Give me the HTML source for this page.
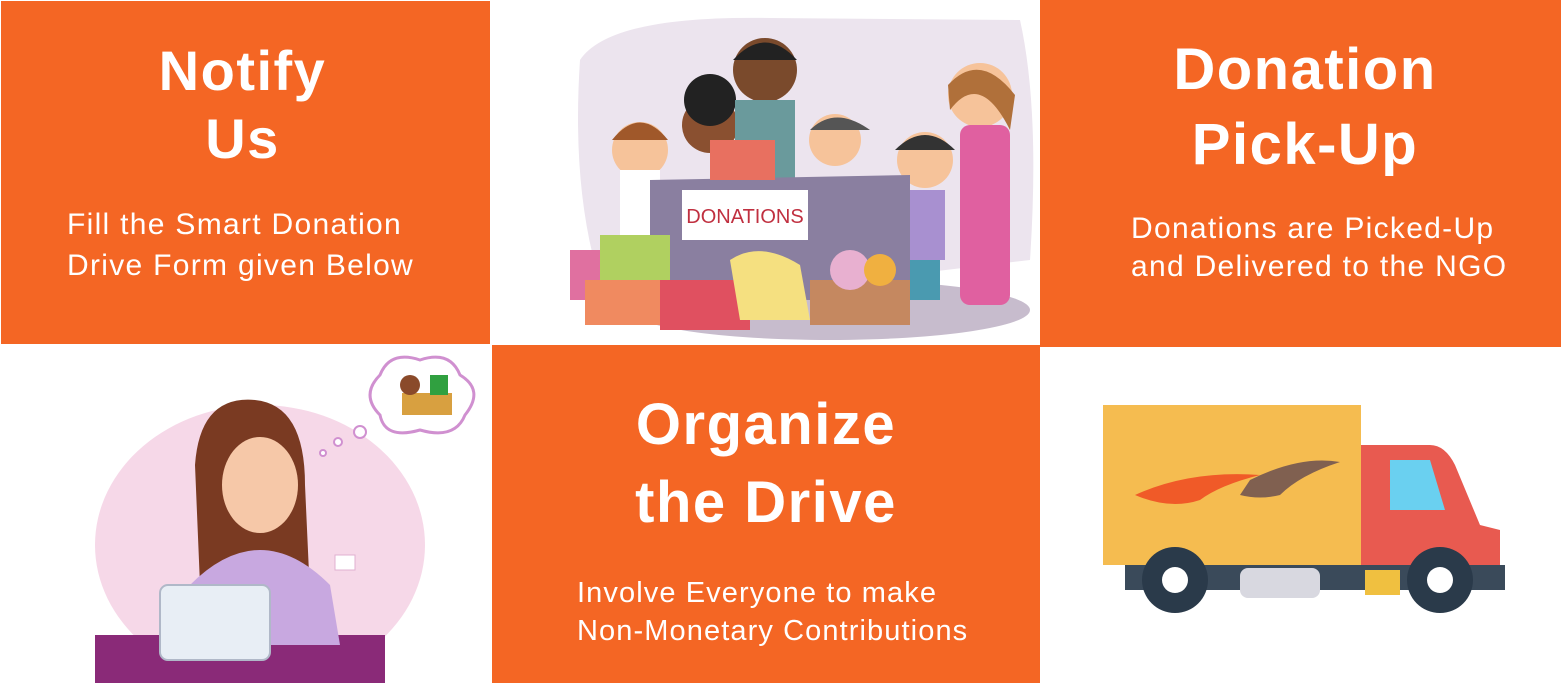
<!DOCTYPE html>
<html><head><meta charset="utf-8"><style>
*{margin:0;padding:0}
body{width:1561px;height:683px;background:#fff;position:relative;overflow:hidden;font-family:"Liberation Sans",sans-serif;color:#fff}
.o{position:absolute;background:#F46624}
.t{position:absolute;font-weight:bold;text-align:center;line-height:1.25;letter-spacing:1.5px}
.s{position:absolute;font-size:30px;line-height:41px;letter-spacing:1.3px;white-space:nowrap}
svg{position:absolute}
</style></head><body>
<div class="o" style="left:1px;top:1px;width:489px;height:343px"></div>
<div class="o" style="left:1040px;top:0;width:521px;height:347px"></div>
<div class="o" style="left:492px;top:345px;width:548px;height:338px"></div>

<div class="t" style="left:0;width:485px;top:37px;font-size:56px;line-height:68px">Notify<br>Us</div>
<div class="s" style="left:67px;top:204px">Fill the Smart Donation<br>Drive Form given Below</div>

<div class="t" style="left:1040px;width:530px;top:32px;font-size:58px;line-height:75px">Donation<br>Pick-Up</div>
<div class="s" style="left:1131px;top:210px;line-height:38px">Donations are Picked-Up<br>and Delivered to the NGO</div>

<div class="t" style="left:492px;width:548px;top:386px;font-size:58px;line-height:78px">Organize<br>the Drive</div>
<div class="s" style="left:577px;top:574px;line-height:38px;font-size:29px;letter-spacing:1.1px">Involve Everyone to make<br>Non-Monetary Contributions</div>

<!-- donations scene -->
<svg style="left:570px;top:10px" width="470" height="335" viewBox="0 0 470 335">
<path d="M10 50 Q40 5 200 8 L450 10 Q470 100 460 250 L40 300 Q0 200 10 50Z" fill="#ece4ee"/>
<ellipse cx="260" cy="300" rx="200" ry="30" fill="#c7bccd"/>
<circle cx="70" cy="140" r="28" fill="#f6c39a"/><path d="M42 130 Q70 95 98 130Z" fill="#a0582a"/>
<rect x="50" y="160" width="40" height="70" fill="#fff"/>
<circle cx="140" cy="115" r="28" fill="#8a5030"/><circle cx="140" cy="90" r="26" fill="#222"/>
<circle cx="195" cy="60" r="32" fill="#7a4a2c"/><path d="M163 50 Q195 15 227 50Z" fill="#222"/>
<rect x="165" y="90" width="60" height="80" fill="#6a9a9c"/>
<circle cx="265" cy="130" r="26" fill="#f6c39a"/><path d="M240 120 Q265 95 300 120Z" fill="#555"/>
<circle cx="355" cy="150" r="28" fill="#f6c39a"/><path d="M325 140 Q355 110 385 140Z" fill="#333"/>
<rect x="330" y="180" width="45" height="70" fill="#a890d0"/><rect x="340" y="250" width="30" height="40" fill="#4a9ab0"/>
<circle cx="410" cy="85" r="32" fill="#f6c39a"/><path d="M378 75 Q410 40 445 85 L440 120 Q410 60 380 100Z" fill="#b0703a"/>
<rect x="390" y="115" width="50" height="180" rx="10" fill="#e060a0"/>
<path d="M80 170 L340 165 L340 290 L80 290Z" fill="#8a7fa0"/>
<rect x="112" y="180" width="126" height="50" fill="#fff"/>
<text x="175" y="213" text-anchor="middle" font-size="20" fill="#c03040" font-family="Liberation Sans">DONATIONS</text>
<rect x="140" y="130" width="65" height="40" fill="#e87060"/>
<rect x="0" y="240" width="90" height="50" fill="#e070a0"/>
<rect x="30" y="225" width="70" height="55" fill="#b0d060"/>
<rect x="15" y="270" width="80" height="45" fill="#f08a60"/>
<rect x="90" y="270" width="90" height="50" fill="#e05060"/>
<path d="M160 250 Q190 230 230 255 L240 310 L170 310Z" fill="#f5e080"/>
<rect x="240" y="270" width="100" height="45" fill="#c58860"/>
<circle cx="280" cy="260" r="20" fill="#e8b0d0"/><circle cx="310" cy="260" r="16" fill="#f0b040"/>
</svg>

<!-- woman -->
<svg style="left:20px;top:345px" width="470" height="338" viewBox="0 0 470 338">
<ellipse cx="240" cy="200" rx="165" ry="140" fill="#f6d8e8"/>
<rect x="75" y="290" width="290" height="48" fill="#8a2a78"/>
<path d="M360 30 Q370 5 400 15 Q430 5 440 30 Q465 45 445 70 Q435 95 400 85 Q365 95 360 70 Q340 50 360 30Z" fill="#fff" stroke="#d090d0" stroke-width="3"/>
<rect x="382" y="48" width="50" height="22" fill="#d8a040"/>
<circle cx="390" cy="40" r="10" fill="#8a4a2a"/><rect x="410" y="30" width="18" height="20" fill="#30a040"/>
<circle cx="340" cy="87" r="6" fill="#fff" stroke="#d090d0" stroke-width="2"/>
<circle cx="318" cy="97" r="4" fill="#fff" stroke="#d090d0" stroke-width="2"/>
<circle cx="303" cy="108" r="3" fill="#fff" stroke="#d090d0" stroke-width="2"/>
<path d="M175 120 Q180 50 235 55 Q285 60 285 140 L290 250 L180 240Z" fill="#7a3a22"/>
<ellipse cx="240" cy="140" rx="38" ry="48" fill="#f6c8a8"/>
<path d="M170 240 Q240 170 310 240 L320 300 L170 300Z" fill="#c8a8e0"/>
<rect x="140" y="240" width="110" height="75" rx="8" fill="#e8eef5" stroke="#b0b8c8" stroke-width="2"/>
<rect x="315" y="210" width="20" height="15" fill="#fff" stroke="#e0b0d0"/>
</svg>

<!-- truck -->
<svg style="left:1100px;top:400px" width="410" height="220" viewBox="0 0 410 220">
<rect x="3" y="5" width="258" height="160" fill="#f5bc50"/>
<path d="M35 95 Q90 70 160 75 Q120 85 100 100 Q70 110 35 95Z" fill="#f05a28"/>
<path d="M150 80 Q200 55 240 62 Q200 75 180 95 Q160 100 140 95Z" fill="#806050"/>
<path d="M261 45 L330 45 Q345 45 355 65 L380 125 L400 130 L400 190 L261 190Z" fill="#e85a50"/>
<path d="M290 60 L330 60 L345 110 L290 110Z" fill="#6ad0f0"/>
<rect x="25" y="165" width="380" height="25" fill="#3a4a5a"/>
<rect x="140" y="168" width="80" height="30" rx="8" fill="#d8d8e0"/>
<circle cx="75" cy="180" r="33" fill="#2a3a4a"/><circle cx="75" cy="180" r="13" fill="#fff"/>
<circle cx="340" cy="180" r="33" fill="#2a3a4a"/><circle cx="340" cy="180" r="13" fill="#fff"/>
<rect x="265" y="170" width="35" height="25" fill="#f0c040"/>
</svg>
</body></html>
